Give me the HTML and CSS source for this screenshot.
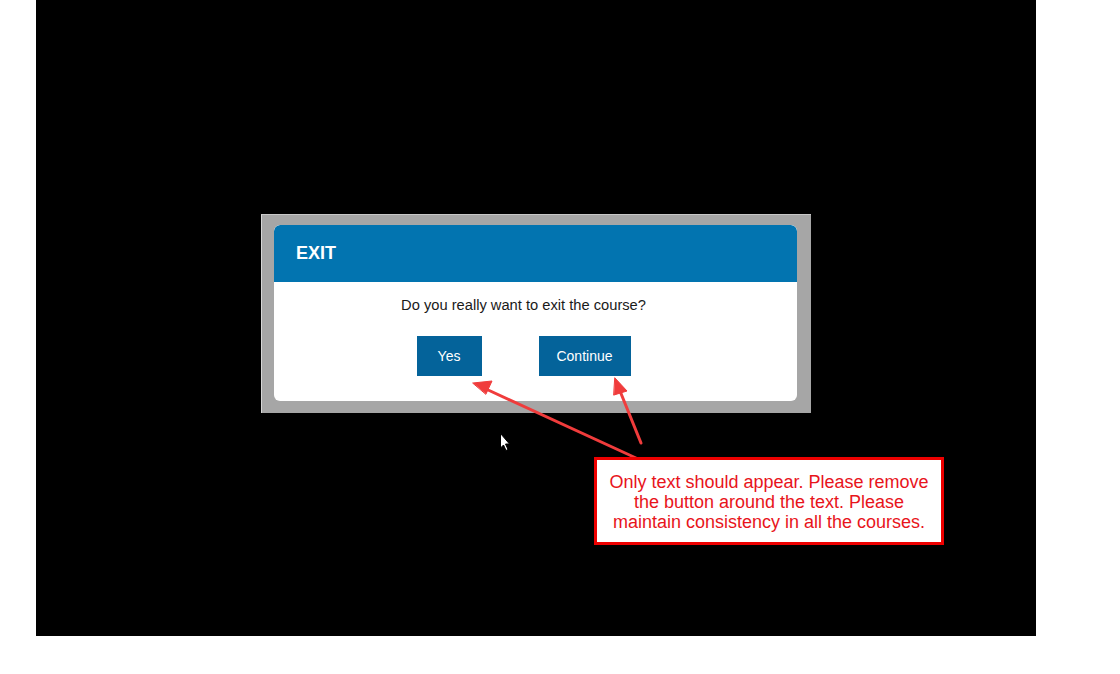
FILE: index.html
```html
<!DOCTYPE html>
<html>
<head>
<meta charset="utf-8">
<link rel="stylesheet" href="styles.css">
</head>
<body>
<div class="stage">
  <div class="dialog">
    <div class="panel">
      <div class="panel-head">EXIT</div>
      <div class="panel-body">
        <p class="question">Do you really want to exit the course?</p>
        <div class="actions">
          <button class="btn btn-yes">Yes</button>
          <button class="btn btn-continue">Continue</button>
        </div>
      </div>
    </div>
  </div>

  <svg class="overlay" width="1000" height="636" viewBox="36 0 1000 636">
    <g stroke="#f03c3c" stroke-width="3" stroke-linecap="round" fill="#f03c3c">
      <line x1="636" y1="458" x2="486" y2="389"/>
      <polygon points="473,383 492,381 486,394" stroke-width="1"/>
      <line x1="641" y1="443" x2="620" y2="391"/>
      <polygon points="615,378 627,391 614,395" stroke-width="1"/>
    </g>
    <path d="M500.5 433.5 L500.5 448 L503.5 445 L506 450.5 L508 449.5 L505.5 444 L509.5 444 Z" fill="#fff" stroke="#000" stroke-width="1"/>
  </svg>

  <div class="note">Only text should appear. Please remove the button around the text. Please maintain consistency in all the courses.</div>
</div>
</body>
</html>
```

FILE: styles.css
```css
html, body {
  margin: 0;
  padding: 0;
  background: #ffffff;
}

body {
  font-family: "Liberation Sans", Arial, sans-serif;
}

.stage {
  position: relative;
  margin-left: 36px;
  width: 1000px;
  height: 636px;
  background: #000000;
  padding: 214px 0 0 225px;
  box-sizing: border-box;
}

.dialog {
  width: 550px;
  height: 199px;
  box-sizing: border-box;
  background: #a6a6a6;
  border-left: 1px solid #d6d6d6;
  border-top: 1px solid #c8c8c8;
  padding: 10px 14px 12px 12px;
}

.panel {
  background: #ffffff;
  border-radius: 6px;
  height: 176px;
  overflow: hidden;
  display: flex;
  flex-direction: column;
}

.panel-head {
  height: 57px;
  flex: none;
  background: #0274b0;
  color: #ffffff;
  font-weight: bold;
  font-size: 18px;
  padding-left: 22px;
  display: flex;
  align-items: center;
  border-radius: 6px 6px 0 0;
}

.panel-body {
  display: flex;
  flex-direction: column;
  align-items: center;
  padding-right: 24px;
}

.question {
  margin: 15px 0 0 0;
  font-size: 14.7px;
  line-height: 17px;
  color: #1a1a1a;
}

.actions {
  display: flex;
  gap: 57px;
  margin-top: 22px;
}

.btn {
  border: none;
  background: #04639a;
  color: #ffffff;
  font-family: "Liberation Sans", Arial, sans-serif;
  font-size: 14px;
  height: 40px;
  padding: 0;
}

.btn-yes {
  width: 65px;
}

.btn-continue {
  width: 92px;
}

.overlay {
  position: absolute;
  left: 0;
  top: 0;
  pointer-events: none;
}

.note {
  position: absolute;
  left: 558px;
  top: 457px;
  width: 350px;
  height: 88px;
  box-sizing: border-box;
  border: 3px solid #ee0000;
  background: #ffffff;
  color: #e8141b;
  font-size: 18px;
  line-height: 20px;
  text-align: center;
  padding: 12px 6px 0;
}
```
